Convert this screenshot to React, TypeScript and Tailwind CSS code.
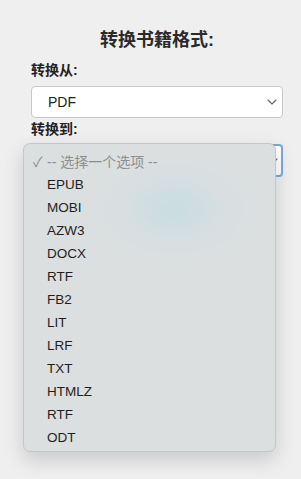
import React from "react";

const Chevron = () => (
  <svg width="10" height="6" viewBox="0 0 10 6" fill="none">
    <path d="M1 1l4 4 4-4" stroke="#666" strokeWidth="1.1" strokeLinecap="round" strokeLinejoin="round" />
  </svg>
);

const items = ["EPUB", "MOBI", "AZW3", "DOCX", "RTF", "FB2", "LIT", "LRF", "TXT", "HTMLZ", "RTF", "ODT"];

export default function App() {
  const font = { fontFamily: '"Liberation Sans", Arial, "Noto Sans CJK SC", sans-serif' };
  return (
    <div className="relative w-[301px] h-[479px] bg-[#efefef] overflow-hidden text-[#222]" style={font}>
      <div className="pl-[31px] pr-[18px] pt-[28px] flex flex-col">
        <h1 className="text-[18px] leading-[24px] font-bold text-center text-[#2a2a2a]">转换书籍格式:</h1>
        <label className="mt-[8px] text-[14px] leading-[20px] font-bold text-[#222]">转换从:</label>
        <div className="mt-[6px] h-[32px] bg-white border border-[#c8c8c8] rounded-[4px] flex items-center justify-between pl-[16px] pr-[5px]">
          <span className="text-[14px] text-[#222]">PDF</span>
          <Chevron />
        </div>
        <label className="mt-[1px] text-[14px] leading-[20px] font-bold text-[#222]">转换到:</label>
        <div className="mt-[5px] h-[33px] bg-white border-2 border-[#7aa9e0] rounded-[4px] flex items-center justify-end pr-[3px]">
          <Chevron />
        </div>
      </div>

      <div className="absolute left-[23px] top-[143px] w-[253px] h-[309px] rounded-[7px] bg-[#dcdfe0] border border-[#c4c6c8] shadow-[0_8px_20px_rgba(0,0,0,0.16)] overflow-hidden pt-[7px]">
        <div className="absolute left-[65px] top-[10px] w-[170px] h-[110px] rounded-full bg-[radial-gradient(ellipse_at_center,rgba(196,220,224,0.8)_0%,rgba(205,222,225,0.4)_40%,rgba(220,223,224,0)_72%)]" />
        <div className="relative flex flex-col">
          <div className="h-[23px] flex items-center text-[#8c8f91]">
            <span className="w-[23px] pl-[9px] text-[14px]">✓</span>
            <span className="text-[14px]">-- 选择一个选项 --</span>
          </div>
          {items.map((t, i) => (
            <div key={i} className="h-[23px] flex items-center pl-[23px] text-[13.5px] text-[#1e1e1e]">
              {t}
            </div>
          ))}
        </div>
      </div>
    </div>
  );
}
